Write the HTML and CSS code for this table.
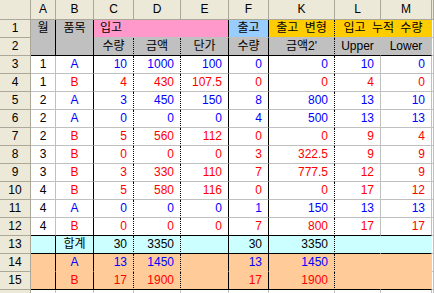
FILE: index.html
```html
<!DOCTYPE html>
<html lang="ko">
<head>
<meta charset="utf-8">
<title>Sheet</title>
<link rel="stylesheet" href="styles.css">
</head>
<body>
<div class="sheet">
  <div class="r hdr">
    <div></div><div>A</div><div>B</div><div>C</div><div>D</div><div>E</div><div>F</div><div>K</div><div>L</div><div>M</div><div></div>
  </div>
  <div class="r h1">
    <div class="rh">1</div>
    <div class="mg">월</div>
    <div class="mg">품목</div>
    <div class="in">입고</div>
    <div class="out">출고</div>
    <div class="var">출고 변형</div>
    <div class="acc">입고 누적 수량</div>
    <div class="n"></div>
  </div>
  <div class="r h2">
    <div class="rh">2</div>
    <div class="cc">수량</div>
    <div>금액</div>
    <div>단가</div>
    <div>수량</div>
    <div>금액2'</div>
    <div>Upper</div>
    <div>Lower</div>
    <div class="n"></div>
  </div>

  <div class="r d blue"><div class="rh">3</div><div>1</div><div>A</div><div>10</div><div>1000</div><div>100</div><div>0</div><div>0</div><div>10</div><div>0</div><div></div></div>
  <div class="r d red"><div class="rh">4</div><div>1</div><div>B</div><div>4</div><div>430</div><div>107.5</div><div>0</div><div>0</div><div>4</div><div>0</div><div></div></div>
  <div class="r d blue"><div class="rh">5</div><div>2</div><div>A</div><div>3</div><div>450</div><div>150</div><div>8</div><div>800</div><div>13</div><div>10</div><div></div></div>
  <div class="r d blue"><div class="rh">6</div><div>2</div><div>A</div><div>0</div><div>0</div><div>0</div><div>4</div><div>500</div><div>13</div><div>13</div><div></div></div>
  <div class="r d red"><div class="rh">7</div><div>2</div><div>B</div><div>5</div><div>560</div><div>112</div><div>0</div><div>0</div><div>9</div><div>4</div><div></div></div>
  <div class="r d red"><div class="rh">8</div><div>3</div><div>B</div><div>0</div><div>0</div><div>0</div><div>3</div><div>322.5</div><div>9</div><div>9</div><div></div></div>
  <div class="r d red"><div class="rh">9</div><div>3</div><div>B</div><div>3</div><div>330</div><div>110</div><div>7</div><div>777.5</div><div>12</div><div>9</div><div></div></div>
  <div class="r d red"><div class="rh">10</div><div>4</div><div>B</div><div>5</div><div>580</div><div>116</div><div>0</div><div>0</div><div>17</div><div>12</div><div></div></div>
  <div class="r d blue"><div class="rh">11</div><div>4</div><div>A</div><div>0</div><div>0</div><div>0</div><div>1</div><div>150</div><div>13</div><div>13</div><div></div></div>
  <div class="r d red last"><div class="rh">12</div><div>4</div><div>B</div><div>0</div><div>0</div><div>0</div><div>7</div><div>800</div><div>17</div><div>17</div><div></div></div>

  <div class="r s tot"><div class="rh">13</div><div></div><div>합계</div><div>30</div><div>3350</div><div></div><div>30</div><div>3350</div><div></div><div></div><div></div></div>
  <div class="r s sub blue first"><div class="rh">14</div><div></div><div>A</div><div>13</div><div>1450</div><div></div><div>13</div><div>1450</div><div></div><div></div><div></div></div>
  <div class="r s sub red"><div class="rh">15</div><div></div><div>B</div><div>17</div><div>1900</div><div></div><div>17</div><div>1900</div><div></div><div></div><div></div></div>

  <div class="r tail"><div class="rh"></div><div></div><div></div><div></div><div></div><div></div><div></div><div></div><div></div><div></div><div></div></div>
</div>
</body>
</html>
```

FILE: styles.css
```css
* { box-sizing: border-box; }

html, body {
  margin: 0;
  background: #fff;
  overflow: hidden;
}

body {
  font: 12px "Liberation Sans", "Noto Sans CJK KR", sans-serif;
  color: #000;
}

.sheet {
  display: grid;
  grid-template-columns: 31px 25px 38px 40px 47px 48px 40px 66px 46px 51px 2px;
  grid-template-rows: 20px repeat(15, 18px) 3px;
  width: 434px;
  height: 293px;
  overflow: hidden;
}

.r { display: contents; }

.r > div {
  border-right: 1px solid #c0c0c0;
  border-bottom: 1px solid #c0c0c0;
  line-height: 17px;
  white-space: nowrap;
  overflow: hidden;
}

.tail > div { border-bottom: 0; }

/* column & row headers */
.hdr > div,
.r > .rh {
  background: #ece9d8;
  border-right-color: #aca899;
  border-bottom-color: #aca899;
  text-align: center;
  color: #000;
}
.hdr > div { line-height: 19px; }

.blue { color: #0000ff; }
.red { color: #ff0000; }

/* title rows */
.h1 > div, .h2 > div { text-align: center; }

.h1 > .mg {
  grid-row: span 2;
  background: #c0c0c0;
  border-right-color: #000;
  border-bottom-color: #000;
}
.h1 > .in {
  grid-column: span 3;
  background: #ff99cc;
  text-align: left;
  padding-left: 6px;
  border-right-color: #000;
  border-bottom-color: #c0c0c0;
}
.h1 > .out {
  background: #99ccff;
  border-right-color: #000;
}
.h1 > .var {
  background: #ffcc00;
  border-right: 1px dotted #000;
  word-spacing: 3px;
}
.h1 > .acc {
  grid-column: span 2;
  background: #ffcc00;
  word-spacing: 3px;
}

.h2 > .cc { grid-column: 4; }
.h2 > div:not(.rh):not(.n) {
  background: #c0c0c0;
  border-bottom-color: #000;
}
.h2 > :nth-child(2),
.h2 > :nth-child(3),
.h2 > :nth-child(6) { border-right: 1px dotted #000; }
.h2 > :nth-child(4),
.h2 > :nth-child(5) { border-right-color: #000; }

/* data rows */
.d > :nth-child(2) { text-align: center; color: #000; }
.d > :nth-child(3) { text-align: center; border-right-color: #000; }
.d > :nth-child(n+4):nth-child(-n+10) { text-align: right; padding-right: 6px; }
.d > :nth-child(4),
.d > :nth-child(5),
.d > :nth-child(8) { border-right: 1px dotted #000; }
.d > :nth-child(6),
.d > :nth-child(7) { border-right-color: #000; }
.d > :nth-child(7) { padding-right: 7px; }
.d > :nth-child(8) { padding-right: 10px; }
.last > :nth-child(n+2):nth-child(-n+10) { border-bottom-color: #000; }

/* summary rows */
.s > :nth-child(3) { text-align: center; }
.s > :nth-child(n+4):nth-child(-n+10) { text-align: right; padding-right: 6px; }
.s > :nth-child(7) { padding-right: 7px; }
.s > :nth-child(8) { padding-right: 10px; }
.s > :nth-child(2),
.s > :nth-child(3),
.s > :nth-child(6),
.s > :nth-child(7) { border-right-color: #000; }
.s > :nth-child(4),
.s > :nth-child(5),
.s > :nth-child(8) { border-right: 1px dotted #000; }
.s > :nth-child(9),
.s > :nth-child(10) { border-right-color: transparent; }

.tot > :nth-child(n+2):nth-child(-n+10) {
  background: #ccffff;
  border-bottom-color: #000;
}
.sub > :nth-child(n+2):nth-child(-n+10) {
  background: #ffcc99;
  border-bottom-color: #000;
}
.sub.first > :nth-child(n+2):nth-child(-n+10) { border-bottom-color: transparent; }
```
